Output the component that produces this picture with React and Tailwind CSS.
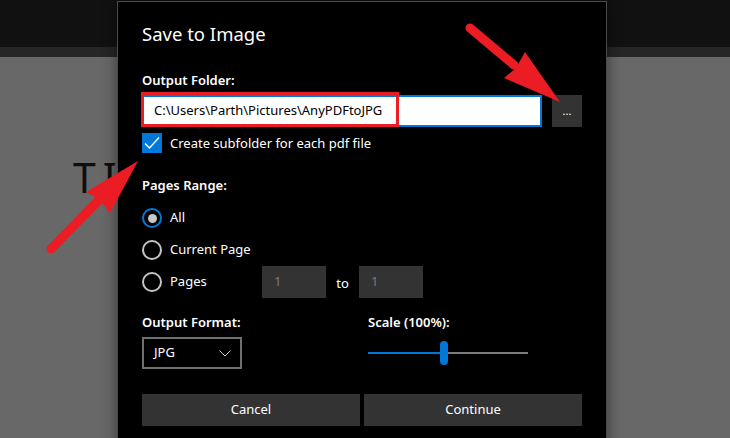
import React from "react";

const font = { fontFamily: '"Noto Sans", "Open Sans", sans-serif' };

function Radio({ checked }) {
  return checked ? (
    <div className="w-[20px] h-[20px] rounded-full border-2 border-[#0078d7] flex items-center justify-center">
      <div className="w-[9px] h-[9px] rounded-full bg-[#c8c8c8]" />
    </div>
  ) : (
    <div className="w-[20px] h-[20px] rounded-full border-2 border-[#c4c4c4]" />
  );
}

export default function App() {
  return (
    <div className="relative w-[730px] h-[438px] overflow-hidden bg-[#686868]" style={font}>
      {/* background app */}
      <div className="flex flex-col h-full">
        <div className="h-[47px] bg-[#111111]" />
        <div className="h-[10px] bg-[#262626]" />
        <div className="flex-1 bg-[#686868] pl-[73px] pt-[96px]">
          <div className="w-[44px] overflow-hidden whitespace-nowrap text-[41px] leading-[48px] tracking-[7px] text-[#0e0e0e]">TI</div>
        </div>
      </div>

      {/* dialog */}
      <div className="absolute left-[117px] top-[1px] w-[490px] h-[460px] bg-black border border-[#4a4a4a] shadow-[0_0_14px_rgba(0,0,0,0.45)] pl-[24px] pr-[24px] text-white">
        <div className="mt-[18px] text-[18.5px] leading-[28px] text-white">Save to Image</div>

        <div className="mt-[22px] text-[13px] leading-[20px] font-semibold">Output Folder:</div>
        <div className="mt-[5px] flex items-center gap-[10px]">
          <div className="w-[400px] h-[32px] bg-white border-2 border-[#0078d7] flex items-center pl-[10px] text-[13px] text-black">
            C:\Users\Parth\Pictures\AnyPDFtoJPG
          </div>
          <div className="w-[30px] h-[32px] bg-[#333333] flex items-center justify-center text-[11px] leading-none pb-[2px]">
            ...
          </div>
        </div>

        <div className="mt-[6px] flex items-center gap-[8px] h-[20px]">
          <div className="w-[20px] h-[20px] bg-[#0078d7] flex items-center justify-center">
            <svg width="20" height="20" viewBox="0 0 20 20">
              <path d="M3 10.5 L7.5 15 L17 4.5" fill="none" stroke="white" strokeWidth="1.4" />
            </svg>
          </div>
          <span className="text-[13px] leading-[20px]">Create subfolder for each pdf file</span>
        </div>

        <div className="mt-[22px] text-[13px] leading-[20px] font-semibold">Pages Range:</div>

        <div className="mt-[7px] flex flex-col">
          <div className="h-[32px] flex items-center gap-[8px]">
            <Radio checked />
            <span className="text-[13px]">All</span>
          </div>
          <div className="h-[32px] flex items-center gap-[8px]">
            <Radio />
            <span className="text-[13px]">Current Page</span>
          </div>
          <div className="h-[32px] flex items-center gap-[8px]">
            <Radio />
            <span className="text-[13px] w-[84px]">Pages</span>
            <div className="flex items-center">
              <div className="w-[64px] h-[32px] bg-[#333333] flex items-center pl-[12px] text-[13px] text-[#7a7a7a]">1</div>
              <div className="w-[33px] text-center text-[13px] pt-[3px]">to</div>
              <div className="w-[64px] h-[32px] bg-[#333333] flex items-center pl-[12px] text-[13px] text-[#7a7a7a]">1</div>
            </div>
          </div>
        </div>

        <div className="mt-[14px] flex">
          <div className="w-[226px] flex flex-col">
            <div className="text-[13px] leading-[20px] font-semibold">Output Format:</div>
            <div className="mt-[5px] w-[100px] h-[32px] border-2 border-[#707070] flex items-center justify-between pl-[10px] pr-[9px] text-[13px]">
              <span>JPG</span>
              <svg width="12" height="7" viewBox="0 0 12 7">
                <path d="M0.5 0.5 L6 6 L11.5 0.5" fill="none" stroke="#cccccc" strokeWidth="1" />
              </svg>
            </div>
          </div>
          <div className="flex flex-col">
            <div className="text-[13px] leading-[20px] font-semibold">Scale (100%):</div>
            <div className="mt-[5px] h-[32px] w-[160px] flex items-center">
              <div className="w-[72px] h-[2px] bg-[#0078d7]" />
              <div className="w-[8px] h-[24px] rounded-full bg-[#0078d7]" />
              <div className="w-[80px] h-[2px] bg-[#7a7a7a]" />
            </div>
          </div>
        </div>

        <div className="mt-[25px] flex gap-[4px]">
          <div className="w-[218px] h-[32px] bg-[#333333] flex items-center justify-center text-[13px]">Cancel</div>
          <div className="w-[218px] h-[32px] bg-[#333333] flex items-center justify-center text-[13px]">Continue</div>
        </div>
      </div>

      {/* red highlight box */}
      <div className="absolute left-[141px] top-[92px] w-[258px] h-[35px] border-[3px] border-[#ec1c24]" />

      {/* arrows */}
      <svg className="absolute left-0 top-0 pointer-events-none" width="730" height="438" viewBox="0 0 730 438">
        <line x1="470" y1="28" x2="514" y2="65" stroke="#ec1c24" strokeWidth="9" strokeLinecap="round" />
        <polygon points="560,102 504,78 516,68 525,52" fill="#ec1c24" />
        <line x1="51" y1="249" x2="100" y2="199" stroke="#ec1c24" strokeWidth="9" strokeLinecap="round" />
        <polygon points="138,161 86,192 99,199 110,213" fill="#ec1c24" />
      </svg>
    </div>
  );
}
